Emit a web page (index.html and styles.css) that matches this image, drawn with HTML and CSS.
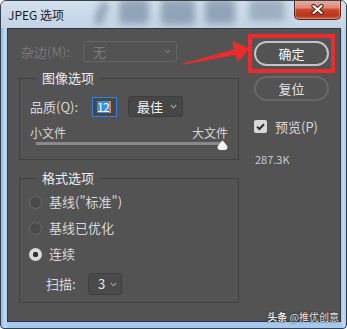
FILE: index.html
```html
<!DOCTYPE html>
<html lang="zh-CN">
<head>
<meta charset="utf-8">
<title>JPEG 选项</title>
<link rel="stylesheet" href="styles.css">
</head>
<body>
<div class="stage">
  <div class="window">
    <div class="titlebar">
      <div class="glass" aria-hidden="true">
        <span class="blob b1"></span>
        <span class="blob b2"></span>
        <span class="blob b3"></span>
        <span class="blob b4"></span>
        <span class="blob b5"></span>
      </div>
      <span class="title">JPEG 选项</span>
      <div class="close">
        <svg width="13" height="11" viewBox="0 0 13 11">
          <path d="M2.5 2 L10.5 9 M10.5 2 L2.5 9" stroke="#4a1c13" stroke-width="4.2" stroke-linecap="round"/>
          <path d="M2.5 2 L10.5 9 M10.5 2 L2.5 9" stroke="#ffffff" stroke-width="2.2" stroke-linecap="round"/>
        </svg>
      </div>
    </div>
    <div class="content">
      <div class="main">
        <div class="left">
          <div class="matte-row">
            <span class="matte-lbl">杂边(M):</span>
            <div class="select matte-sel">
              <span>无</span>
              <svg class="chev" width="7" height="5" viewBox="0 0 7 5"><path d="M0.8 1 L3.5 3.8 L6.2 1" fill="none" stroke="currentColor" stroke-width="1.1"/></svg>
            </div>
          </div>

          <div class="group g1">
            <div class="group-title">图像选项</div>
            <div class="q-row">
              <span class="lbl q-lbl">品质(Q):</span>
              <div class="num-input"><span class="sel-text">12</span><span class="caret"></span></div>
              <div class="select q-sel">
                <span>最佳</span>
                <svg class="chev" width="7" height="5" viewBox="0 0 7 5"><path d="M0.8 1 L3.5 3.8 L6.2 1" fill="none" stroke="currentColor" stroke-width="1.1"/></svg>
              </div>
            </div>
            <div class="slider">
              <div class="slider-labels"><span>小文件</span><span>大文件</span></div>
              <div class="track"></div>
              <svg class="thumb" width="11" height="10" viewBox="0 0 11 10">
                <path d="M5.5 0.3 L9.6 5.2 Q11 6.8 10.3 8.6 Q9.7 10 8.2 10 L2.8 10 Q1.3 10 0.7 8.6 Q0 6.8 1.4 5.2 Z" fill="#f4f4f4"/>
              </svg>
            </div>
          </div>

          <div class="group g2">
            <div class="group-title">格式选项</div>
            <div class="radio-row"><span class="radio"></span><span class="lbl">基线("标准")</span></div>
            <div class="radio-row"><span class="radio"></span><span class="lbl">基线已优化</span></div>
            <div class="radio-row"><span class="radio on"></span><span class="lbl">连续</span></div>
            <div class="scan-row">
              <span class="lbl scan-lbl">扫描:</span>
              <div class="select scan-sel">
                <span>3</span>
                <svg class="chev" width="7" height="5" viewBox="0 0 7 5"><path d="M0.8 1 L3.5 3.8 L6.2 1" fill="none" stroke="currentColor" stroke-width="1.1"/></svg>
              </div>
            </div>
          </div>
        </div>

        <div class="right">
          <div class="btn btn-ok">确定</div>
          <div class="btn btn-reset">复位</div>
          <div class="check-row">
            <span class="check">
              <svg width="13" height="13" viewBox="0 0 13 13"><path d="M3 6.6 L5.4 9 L10 4.2" fill="none" stroke="#2e2e2e" stroke-width="2"/></svg>
            </span>
            <span class="lbl">预览(P)</span>
          </div>
          <div class="size">287.3K</div>
        </div>
      </div>
      <div class="watermark"><b>头条</b> @推优创意</div>
    </div>
  </div>

  <div class="annot-rect"></div>
  <svg class="annot-arrow" width="347" height="329" viewBox="0 0 347 329">
    <polygon points="183,64.8 235,55 238,62 249,48.5 232,41 234,49.5 183,63.6" fill="#ee2b2b"/>
  </svg>
</div>
</body>
</html>
```

FILE: styles.css
```css
* { box-sizing: border-box; }

html, body {
  margin: 0;
  padding: 0;
  background: #ffffff;
}

body {
  font-family: "Noto Sans CJK SC", "Noto Sans", sans-serif;
}

.stage {
  position: relative;
  width: 347px;
  height: 329px;
}

.window {
  width: 347px;
  height: 329px;
  border: 1px solid #37424f;
  border-radius: 6px 6px 4px 4px;
  padding: 0 5px 6px 6px;
  background: linear-gradient(to right, #8fb8e3 0px, #c3dbf3 4px, #a6c8ec 7px, #a6c8ec 340px, #c6dcf2 343px, #8db5e0 346px);
  overflow: hidden;
  display: flex;
  flex-direction: column;
}

.titlebar {
  position: relative;
  height: 27px;
  margin: 0 -5px 0 -6px;
  padding-left: 7px;
  display: flex;
  align-items: center;
  justify-content: space-between;
  background: linear-gradient(to bottom, #d3e0ed, #c3d4e6);
  overflow: hidden;
}

.glass {
  position: absolute;
  inset: 0;
  filter: blur(3.5px);
  opacity: 0.75;
}

.blob {
  position: absolute;
  background: #7f91a7;
  border-radius: 4px;
}

.b1 { left: 96px;  top: 0;   width: 9px;  height: 24px; transform: rotate(22deg); }
.b2 { left: 118px; top: -2px; width: 30px; height: 25px; }
.b3 { left: 160px; top: -2px; width: 34px; height: 26px; }
.b4 { left: 204px; top: -2px; width: 30px; height: 25px; }
.b5 { left: 248px; top: -2px; width: 36px; height: 22px; opacity: 0.8; }

.title {
  position: relative;
  font-size: 12px;
  line-height: 16px;
  color: #1b1b1b;
  margin-top: 1px;
}

.close {
  position: relative;
  align-self: flex-start;
  margin-top: -1px;
  margin-right: 5px;
  width: 47px;
  height: 20px;
  border: 1px solid #5b2117;
  border-top: none;
  border-radius: 0 0 5px 5px;
  background: linear-gradient(to bottom, #eab0a2 0%, #dc8a78 40%, #c8442a 52%, #b9351d 80%, #c75a3e 100%);
  box-shadow: inset 0 0 0 1px rgba(255, 220, 210, 0.35);
  display: flex;
  align-items: center;
  justify-content: center;
}

.content {
  position: relative;
  flex: 1;
  background: #535353;
  border: 1px solid #2e3a47;
}

.main {
  display: grid;
  grid-template-columns: 220px 75px;
  column-gap: 15px;
  padding: 12px 0 0 11px;
}

.left {
  display: flex;
  flex-direction: column;
}

.lbl {
  font-size: 13px;
  line-height: 16px;
  color: #d8d8d8;
  white-space: nowrap;
}

.matte-row {
  display: flex;
  align-items: center;
  height: 21px;
  padding-left: 2px;
}

.matte-lbl {
  width: 62px;
  font-size: 13px;
  line-height: 16px;
  color: #787878;
}

.select {
  position: relative;
  display: flex;
  align-items: center;
  border-radius: 3px;
  font-size: 13px;
  line-height: 16px;
}

.chev {
  margin-left: auto;
  display: block;
}

.matte-sel {
  width: 94px;
  height: 21px;
  border: 1px solid #656565;
  padding: 0 5px 0 9px;
  color: #7a7a7a;
}

.group {
  border: 1px solid #3f3f3f;
  padding: 0 10px;
}

.group-title {
  width: fit-content;
  margin: -9px 0 0 6px;
  padding: 0 6px;
  background: #535353;
  font-size: 13px;
  line-height: 16px;
  color: #ececec;
}

.g1 {
  margin-top: 16px;
  padding-bottom: 14px;
}

.q-row {
  display: flex;
  align-items: center;
  height: 21px;
  margin-top: 10px;
}

.q-lbl {
  width: 62px;
}

.num-input {
  display: flex;
  align-items: center;
  width: 25px;
  height: 20px;
  border: 1px solid #2f82e6;
  background: #474747;
  padding-left: 4px;
}

.sel-text {
  display: block;
  width: 12px;
  height: 12px;
  background: #3a8de8;
  color: #ffffff;
  font-size: 12px;
  line-height: 12px;
  letter-spacing: -0.6px;
  overflow: visible;
  white-space: nowrap;
}

.caret {
  display: block;
  width: 2px;
  height: 12px;
  background: #e6812d;
}

.q-sel {
  width: 55px;
  height: 21px;
  margin-left: 11px;
  border: 1px solid #3d3d3d;
  background: #464646;
  padding: 0 5px 0 8px;
  color: #f2f2f2;
}

.q-sel .chev {
  color: #a8a8a8;
}

.slider {
  position: relative;
  margin-top: 9px;
}

.slider-labels {
  display: flex;
  justify-content: space-between;
  font-size: 12px;
  line-height: 14px;
  color: #d6d6d6;
}

.track {
  height: 3px;
  margin: 2px 7px 0 6px;
  background: #8a8a8a;
}

.thumb {
  position: absolute;
  right: 0;
  top: 14px;
  display: block;
}

.g2 {
  margin-top: 18px;
  padding-bottom: 7px;
}

.radio-row {
  display: flex;
  align-items: center;
  height: 26px;
}

.g2 .group-title + .radio-row {
  margin-top: 3px;
}

.radio {
  width: 13px;
  height: 13px;
  margin-left: -1px;
  margin-right: 7px;
  border-radius: 50%;
  border: 1px solid #6c6c6c;
  background: #4a4a4a;
  flex: none;
}

.radio.on {
  border: none;
  background: radial-gradient(circle, #2f2f2f 0, #2f2f2f 2.5px, #d9d9d9 3px);
}

.scan-row {
  display: flex;
  align-items: center;
  height: 22px;
  margin-top: 6px;
  padding-left: 16px;
}

.scan-lbl {
  width: 42px;
}

.scan-sel {
  width: 34px;
  height: 22px;
  border: 1px solid #3f3f3f;
  background: #4a4a4a;
  padding: 0 4px 0 9px;
  color: #e8e8e8;
}

.scan-sel .chev {
  color: #9c9c9c;
}

.right {
  display: flex;
  flex-direction: column;
}

.btn {
  width: 75px;
  height: 25px;
  border-radius: 13px;
  display: flex;
  align-items: center;
  justify-content: center;
  font-size: 13px;
  line-height: 16px;
}

.btn-ok {
  border: 2px solid #c4c4c4;
  color: #f6f6f6;
}

.btn-reset {
  margin-top: 10px;
  border: 2px solid #686868;
  color: #e4e4e4;
}

.check-row {
  display: flex;
  align-items: center;
  height: 13px;
  margin-top: 19px;
}

.check {
  width: 13px;
  height: 13px;
  border-radius: 2px;
  background: #d9d9d9;
  margin-right: 8px;
  flex: none;
}

.check svg {
  display: block;
}

.size {
  margin-top: 19px;
  margin-left: 1px;
  font-size: 11px;
  line-height: 14px;
  color: #c4ccd6;
}

.watermark {
  position: absolute;
  right: 1px;
  bottom: -2px;
  font-size: 10px;
  line-height: 12px;
  color: #e8e8e8;
  text-shadow: 0 0 2px #222, 0 0 1px #222;
  white-space: nowrap;
}

.annot-rect {
  position: absolute;
  left: 248px;
  top: 34px;
  width: 87px;
  height: 39px;
  border: 4px solid #ee2b2b;
}

.annot-arrow {
  position: absolute;
  left: 0;
  top: 0;
  pointer-events: none;
}
```
